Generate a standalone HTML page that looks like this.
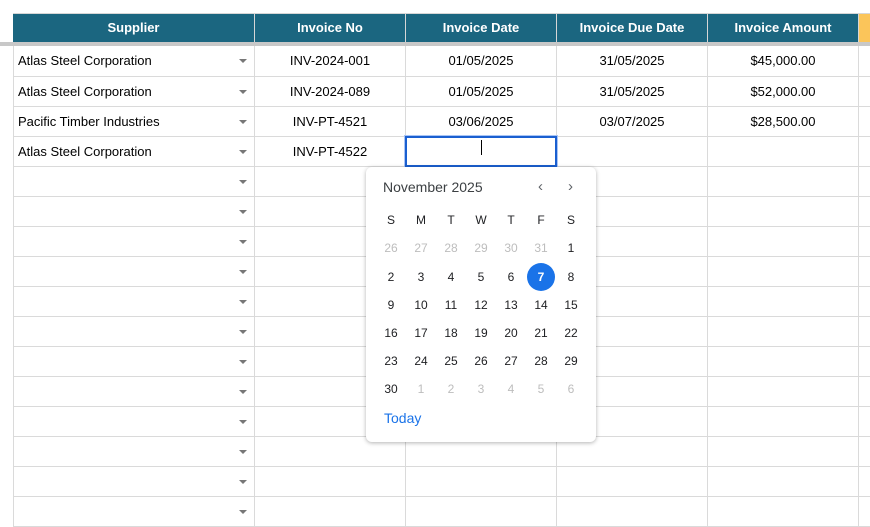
<!DOCTYPE html>
<html><head><style>
*{margin:0;padding:0;box-sizing:border-box}
body{width:870px;height:508px;overflow:hidden;background:#fff;font-family:"Liberation Sans",Arial,sans-serif;position:relative}
.hd{position:absolute;top:13px;height:29px;background:#1b6680;color:#fff;font-weight:bold;font-size:13px;line-height:29px;text-align:center;border-right:1px solid #d6d6d6}
.bar{position:absolute;left:0;top:42px;width:870px;height:4px;background:#c8c8c8}
table{position:absolute;left:13px;top:46px;width:857px;border-collapse:collapse;table-layout:fixed;font-size:13px;color:#000}
td{height:30px;border:1px solid #dadada;border-top:none;text-align:center;padding:0;white-space:nowrap;overflow:hidden}
td.s{text-align:left;padding-left:4px;position:relative}
td.s::after{content:"";position:absolute;right:7px;top:13px;border-left:4px solid transparent;border-right:4px solid transparent;border-top:4px solid #777}
.sel{position:absolute;left:405px;top:136px;width:152px;height:31px;border:2px solid #1a5fd0;box-shadow:0 0 0 1px #a8c4f5}
.caret{position:absolute;left:481px;top:140px;width:1px;height:15px;background:#000}
.cal{position:absolute;left:366px;top:167px;width:230px;height:275px;background:#fff;border-radius:6px;box-shadow:0 1px 4px rgba(0,0,0,.3);font-family:"Liberation Sans",Arial,sans-serif}
.cal .t{position:absolute;left:17px;top:12px;font-size:14px;color:#3c4043}
.cal .n{position:absolute;top:11px;font-size:15px;color:#5f6368}
.d{position:absolute;width:28px;height:20px;text-align:center;font-size:12px;color:#202124;line-height:20px}
.g{color:#bdbdbd}
.on{background:#1a73e8;color:#fff;border-radius:50%;height:28px;line-height:28px;font-weight:bold}
.today{position:absolute;left:18px;top:243px;color:#1a73e8;font-size:14px}
</style></head><body>
<div class="hd" style="left:13px;width:242px">Supplier</div>
<div class="hd" style="left:255px;width:151px">Invoice No</div>
<div class="hd" style="left:406px;width:151px">Invoice Date</div>
<div class="hd" style="left:557px;width:151px">Invoice Due Date</div>
<div class="hd" style="left:708px;width:151px">Invoice Amount</div>
<div class="hd" style="left:859px;width:11px;background:#fbc55a;border:none"></div>
<div style="position:absolute;left:13px;top:13px;width:857px;height:1px;background:#d6d6d6"></div>
<div class="bar"></div>
<table>
<colgroup><col style="width:241px"><col style="width:151px"><col style="width:151px"><col style="width:151px"><col style="width:151px"><col style="width:12px"></colgroup>
<tr><td class="s">Atlas Steel Corporation</td><td>INV-2024-001</td><td>01/05/2025</td><td>31/05/2025</td><td>$45,000.00</td><td></td></tr>
<tr><td class="s">Atlas Steel Corporation</td><td>INV-2024-089</td><td>01/05/2025</td><td>31/05/2025</td><td>$52,000.00</td><td></td></tr>
<tr><td class="s">Pacific Timber Industries</td><td>INV-PT-4521</td><td>03/06/2025</td><td>03/07/2025</td><td>$28,500.00</td><td></td></tr>
<tr><td class="s">Atlas Steel Corporation</td><td>INV-PT-4522</td><td></td><td></td><td></td><td></td></tr>
<tr><td class="s"></td><td></td><td></td><td></td><td></td><td></td></tr>
<tr><td class="s"></td><td></td><td></td><td></td><td></td><td></td></tr>
<tr><td class="s"></td><td></td><td></td><td></td><td></td><td></td></tr>
<tr><td class="s"></td><td></td><td></td><td></td><td></td><td></td></tr>
<tr><td class="s"></td><td></td><td></td><td></td><td></td><td></td></tr>
<tr><td class="s"></td><td></td><td></td><td></td><td></td><td></td></tr>
<tr><td class="s"></td><td></td><td></td><td></td><td></td><td></td></tr>
<tr><td class="s"></td><td></td><td></td><td></td><td></td><td></td></tr>
<tr><td class="s"></td><td></td><td></td><td></td><td></td><td></td></tr>
<tr><td class="s"></td><td></td><td></td><td></td><td></td><td></td></tr>
<tr><td class="s"></td><td></td><td></td><td></td><td></td><td></td></tr>
<tr><td class="s"></td><td></td><td></td><td></td><td></td><td></td></tr>
</table>
<div class="sel"></div><div class="caret"></div>
<div class="cal">
<div class="t">November 2025</div>
<div class="n" style="left:172px">&#8249;</div><div class="n" style="left:202px">&#8250;</div>
<div class="d" style="left:11px;top:43px">S</div><div class="d" style="left:41px;top:43px">M</div><div class="d" style="left:71px;top:43px">T</div><div class="d" style="left:101px;top:43px">W</div><div class="d" style="left:131px;top:43px">T</div><div class="d" style="left:161px;top:43px">F</div><div class="d" style="left:191px;top:43px">S</div>
<div class="d g" style="left:11px;top:71px">26</div><div class="d g" style="left:41px;top:71px">27</div><div class="d g" style="left:71px;top:71px">28</div><div class="d g" style="left:101px;top:71px">29</div><div class="d g" style="left:131px;top:71px">30</div><div class="d g" style="left:161px;top:71px">31</div><div class="d" style="left:191px;top:71px">1</div>
<div class="d" style="left:11px;top:100px">2</div><div class="d" style="left:41px;top:100px">3</div><div class="d" style="left:71px;top:100px">4</div><div class="d" style="left:101px;top:100px">5</div><div class="d" style="left:131px;top:100px">6</div><div class="d on" style="left:161px;top:96px">7</div><div class="d" style="left:191px;top:100px">8</div>
<div class="d" style="left:11px;top:128px">9</div><div class="d" style="left:41px;top:128px">10</div><div class="d" style="left:71px;top:128px">11</div><div class="d" style="left:101px;top:128px">12</div><div class="d" style="left:131px;top:128px">13</div><div class="d" style="left:161px;top:128px">14</div><div class="d" style="left:191px;top:128px">15</div>
<div class="d" style="left:11px;top:156px">16</div><div class="d" style="left:41px;top:156px">17</div><div class="d" style="left:71px;top:156px">18</div><div class="d" style="left:101px;top:156px">19</div><div class="d" style="left:131px;top:156px">20</div><div class="d" style="left:161px;top:156px">21</div><div class="d" style="left:191px;top:156px">22</div>
<div class="d" style="left:11px;top:184px">23</div><div class="d" style="left:41px;top:184px">24</div><div class="d" style="left:71px;top:184px">25</div><div class="d" style="left:101px;top:184px">26</div><div class="d" style="left:131px;top:184px">27</div><div class="d" style="left:161px;top:184px">28</div><div class="d" style="left:191px;top:184px">29</div>
<div class="d" style="left:11px;top:212px">30</div><div class="d g" style="left:41px;top:212px">1</div><div class="d g" style="left:71px;top:212px">2</div><div class="d g" style="left:101px;top:212px">3</div><div class="d g" style="left:131px;top:212px">4</div><div class="d g" style="left:161px;top:212px">5</div><div class="d g" style="left:191px;top:212px">6</div>
<div class="today">Today</div>
</div>
</body></html>
